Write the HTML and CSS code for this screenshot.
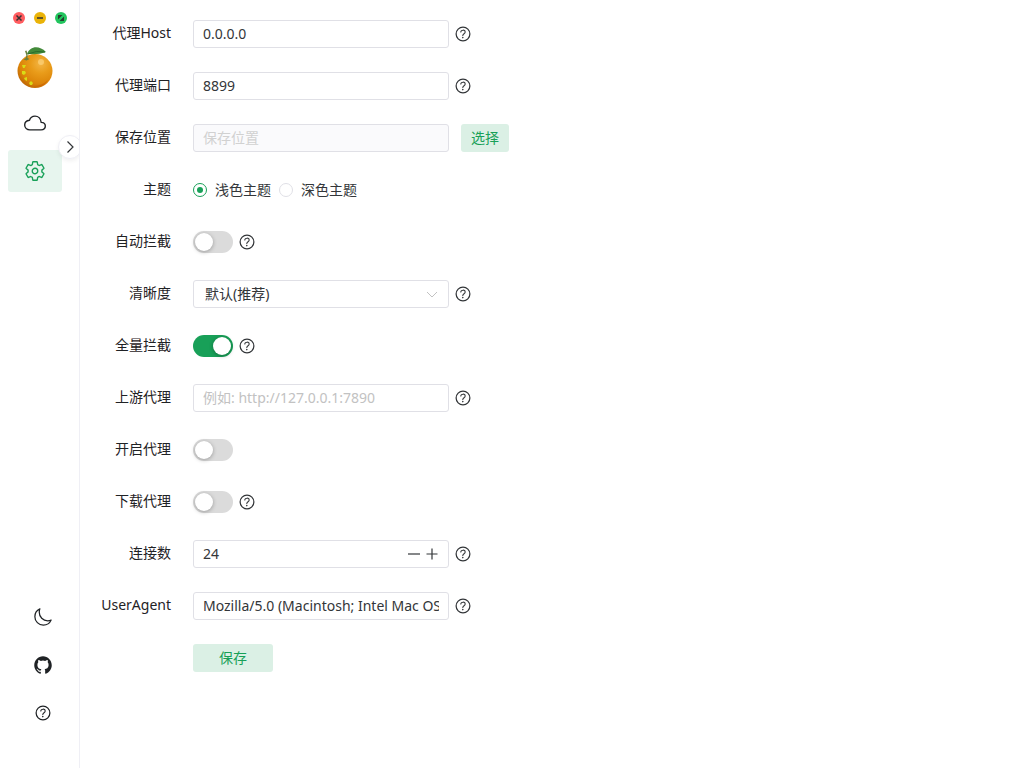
FILE: index.html
```html
<!DOCTYPE html>
<html lang="zh-CN">
<head>
    <meta charset="UTF-8">
    <meta name="viewport" content="width=device-width, initial-scale=1.0">
    <title>设置</title>
    <link rel="stylesheet" href="styles.css">
</head>
<body>

    <!-- shared icons -->
    <svg class="sprite" aria-hidden="true">
        <symbol id="icon-help" viewBox="0 0 512 512">
            <path d="M256 80a176 176 0 10176 176A176 176 0 00256 80z" fill="none" stroke="currentColor" stroke-width="32" stroke-miterlimit="10"/>
            <path d="M200 202.29s.84-17.5 19.57-32.57C230.68 160.77 244 158.18 256 158c10.93-.14 20.69 1.67 26.53 4.45 10 4.76 29.47 16.38 29.47 41.09 0 26-17 37.81-36.37 50.8S251 281.43 251 296" fill="none" stroke="currentColor" stroke-width="28" stroke-linecap="round" stroke-miterlimit="10"/>
            <circle cx="250" cy="348" r="20" fill="currentColor"/>
        </symbol>
    </svg>

    <div class="app">
        <aside class="sidebar">
            <div class="window-controls">
                <button type="button" class="dot dot-close" aria-label="关闭">
                    <svg viewBox="0 0 12 12"><path d="M3.5 3.5l5 5M8.5 3.5l-5 5"/></svg>
                </button>
                <button type="button" class="dot dot-min" aria-label="最小化">
                    <svg viewBox="0 0 12 12"><path d="M3 6h6"/></svg>
                </button>
                <button type="button" class="dot dot-max" aria-label="最大化">
                    <svg viewBox="0 0 12 12"><path class="solid" d="M3 3h4.5L3 7.5zM9 9H4.5L9 4.5z"/></svg>
                </button>
            </div>

            <svg class="logo" viewBox="0 0 36 42" role="img" aria-label="logo">
                <defs>
                    <radialGradient id="peel" cx="0.66" cy="0.28" r="0.8">
                        <stop offset="0" stop-color="#f3b545"/>
                        <stop offset="0.35" stop-color="#e99c1a"/>
                        <stop offset="0.75" stop-color="#dc8408"/>
                        <stop offset="1" stop-color="#b96205"/>
                    </radialGradient>
                </defs>
                <ellipse cx="18" cy="25" rx="17.5" ry="17" fill="url(#peel)"/>
                <path d="M31 34q-6 6-15 6q10 3 15-6z" fill="#c85e05" opacity=".6"/>
                <path d="M9 12q1-3-1-7l1.500-.5q2 4 1 7.500l2 1-3 1.500-3-1z" fill="#6b7f3c"/>
                <path d="M10 8C13 0 22-1 29 6 22 9 15 8 10 8z" fill="#438a3a"/>
                <path d="M11 8q8-4 17-2" fill="none" stroke="#2b6a2a" stroke-width="1"/>
                <circle cx="24" cy="16" r="3" fill="#ffd886" opacity=".6"/>
                <g fill="#d8dc16">
                    <path d="M5 19h4l-1.500 3H6z"/>
                    <path d="M5 25l3 0 1 2-2 2-2-1z"/>
                    <path d="M7 32l3-1 0 4-2-1z"/>
                    <path d="M12 37l2-2 2 2-1 2-2 0z"/>
                </g>
            </svg>

            <nav class="menu">
                <a href="#" class="menu-item" aria-label="首页">
                    <svg viewBox="0 0 512 512"><path d="M400 240c-8.89-89.54-71-144-144-144-69 0-113.44 48.2-128 96-60 6-112 43.59-112 112 0 66 54 112 120 112h260c55 0 100-27.44 100-88 0-59.82-53-85.76-96-88z"/></svg>
                </a>
                <a href="#" class="menu-item active" aria-label="设置">
                    <svg viewBox="0 0 512 512"><path d="M262.29 192.31a64 64 0 1057.4 57.4 64.13 64.13 0 00-57.4-57.4zM416.39 256a154.34 154.34 0 01-1.53 20.79l45.21 35.46a10.81 10.81 0 012.45 13.75l-42.77 74a10.81 10.81 0 01-13.14 4.59l-44.9-18.08a16.11 16.11 0 00-15.17 1.75A164.48 164.48 0 01325 400.8a15.94 15.94 0 00-8.82 12.14l-6.73 47.89a11.08 11.08 0 01-10.68 9.17h-85.54a11.11 11.11 0 01-10.69-8.87l-6.72-47.82a16.07 16.07 0 00-9-12.22 155.3 155.3 0 01-21.46-12.57 16 16 0 00-15.11-1.71l-44.89 18.07a10.81 10.81 0 01-13.14-4.58l-42.77-74a10.8 10.8 0 012.45-13.75l38.21-30a16.05 16.05 0 006-14.08c-.36-4.17-.58-8.33-.58-12.5s.21-8.27.58-12.35a16 16 0 00-6.07-13.94l-38.19-30A10.81 10.81 0 0149.48 186l42.77-74a10.81 10.81 0 0113.14-4.59l44.9 18.08a16.11 16.11 0 0015.17-1.75A164.48 164.48 0 01187 111.2a15.94 15.94 0 008.82-12.14l6.73-47.89A11.08 11.08 0 01213.23 42h85.54a11.11 11.11 0 0110.69 8.87l6.72 47.82a16.07 16.07 0 009 12.22 155.3 155.3 0 0121.46 12.57 16 16 0 0015.11 1.71l44.89-18.07a10.81 10.81 0 0113.14 4.58l42.77 74a10.8 10.8 0 01-2.45 13.75l-38.21 30a16.05 16.05 0 00-6.05 14.08c.33 4.14.55 8.3.55 12.47z"/></svg>
                </a>
            </nav>

            <div class="sidebar-footer">
                <button type="button" class="footer-item" aria-label="切换主题">
                    <svg class="icon" viewBox="0 0 512 512"><path d="M160 136c0-30.62 4.51-61.61 16-88C99.57 81.27 48 159.32 48 248c0 119.29 96.71 216 216 216 88.68 0 166.73-51.57 200-128-26.39 11.49-57.38 16-88 16-119.29 0-216-96.71-216-216z" fill="none" stroke="currentColor" stroke-width="32" stroke-linejoin="round"/></svg>
                </button>
                <a href="#" class="footer-item" aria-label="GitHub">
                    <svg class="icon" viewBox="0 0 512 512"><path fill="currentColor" d="M256 32C132.3 32 32 134.9 32 261.7c0 101.5 64.2 187.5 153.2 217.9a17.56 17.56 0 003.8.4c8.3 0 11.5-6.1 11.5-11.4 0-5.5-.2-19.9-.3-39.1a102.4 102.4 0 01-22.6 2.7c-43.1 0-52.9-33.5-52.9-33.5-10.2-26.5-24.9-33.6-24.9-33.6-19.5-13.7-.1-14.1 1.4-14.1h.1c22.5 2 34.3 23.8 34.3 23.8 11.2 19.6 26.2 25.1 39.6 25.1a63 63 0 0025.6-6c2-14.8 7.8-24.9 14.2-30.7-49.7-5.8-102-25.5-102-113.5 0-25.1 8.7-45.6 23-61.6-2.3-5.8-10-29.2 2.2-60.8a18.64 18.64 0 015-.5c8.1 0 26.4 3.1 56.6 24.1a208.21 208.21 0 01112.2 0c30.2-21 48.5-24.1 56.6-24.1a18.64 18.64 0 015 .5c12.2 31.6 4.5 55 2.2 60.8 14.3 16.1 23 36.6 23 61.6 0 88.2-52.4 107.6-102.3 113.3 8 7.1 15.2 21.1 15.2 42.5 0 30.7-.3 55.5-.3 63 0 5.4 3.1 11.5 11.4 11.5a19.35 19.35 0 004-.4C415.9 449.2 480 363.1 480 261.7 480 134.9 379.7 32 256 32z"/></svg>
                </a>
                <button type="button" class="footer-item" aria-label="帮助">
                    <svg class="icon"><use href="#icon-help"/></svg>
                </button>
            </div>

            <button type="button" class="collapse-button" aria-label="展开">
                <svg viewBox="0 0 16 16"><path d="M5.5 2.500l5.500 5.500-5.500 5.500"/></svg>
            </button>
        </aside>

        <main class="content">
            <form id="settings-form" class="settings">
                <div class="form-row">
                    <label class="form-label" for="host">代理Host</label>
                    <input type="text" id="host" class="field" value="0.0.0.0">
                    <svg class="icon help"><use href="#icon-help"/></svg>
                </div>

                <div class="form-row">
                    <label class="form-label" for="port">代理端口</label>
                    <input type="text" id="port" class="field" value="8899">
                    <svg class="icon help"><use href="#icon-help"/></svg>
                </div>

                <div class="form-row">
                    <label class="form-label" for="save-dir">保存位置</label>
                    <input type="text" id="save-dir" class="field" placeholder="保存位置" disabled>
                    <button type="button" class="button select-button">选择</button>
                </div>

                <div class="form-row" role="radiogroup" aria-labelledby="theme-label">
                    <span class="form-label" id="theme-label">主题</span>
                    <label class="radio"><input type="radio" name="theme" value="light" checked><span>浅色主题</span></label>
                    <label class="radio"><input type="radio" name="theme" value="dark"><span>深色主题</span></label>
                </div>

                <div class="form-row">
                    <label class="form-label" for="auto-proxy">自动拦截</label>
                    <input type="checkbox" id="auto-proxy" class="switch">
                    <svg class="icon help"><use href="#icon-help"/></svg>
                </div>

                <div class="form-row">
                    <label class="form-label" for="quality">清晰度</label>
                    <div class="select-box">
                        <select id="quality" class="field">
                            <option>默认(推荐)</option>
                            <option>超清</option>
                            <option>高画质</option>
                        </select>
                        <svg class="arrow" viewBox="0 0 16 16"><path d="M3 6l5 5 5-5"/></svg>
                    </div>
                    <svg class="icon help"><use href="#icon-help"/></svg>
                </div>

                <div class="form-row">
                    <label class="form-label" for="wx-action">全量拦截</label>
                    <input type="checkbox" id="wx-action" class="switch" checked>
                    <svg class="icon help"><use href="#icon-help"/></svg>
                </div>

                <div class="form-row">
                    <label class="form-label" for="upstream">上游代理</label>
                    <input type="text" id="upstream" class="field" placeholder="例如: http://127.0.0.1:7890">
                    <svg class="icon help"><use href="#icon-help"/></svg>
                </div>

                <div class="form-row">
                    <label class="form-label" for="open-proxy">开启代理</label>
                    <input type="checkbox" id="open-proxy" class="switch">
                </div>

                <div class="form-row">
                    <label class="form-label" for="download-proxy">下载代理</label>
                    <input type="checkbox" id="download-proxy" class="switch">
                    <svg class="icon help"><use href="#icon-help"/></svg>
                </div>

                <div class="form-row">
                    <label class="form-label" for="task-number">连接数</label>
                    <div class="field number-box">
                        <input type="number" id="task-number" value="24" min="2" max="64">
                        <button type="button" class="step" data-step="-1" aria-label="减少"><svg viewBox="0 0 18 18"><path d="M3 9h12"/></svg></button>
                        <button type="button" class="step" data-step="1" aria-label="增加"><svg viewBox="0 0 18 18"><path d="M3.500 9h11M9 3.500v11"/></svg></button>
                    </div>
                    <svg class="icon help"><use href="#icon-help"/></svg>
                </div>

                <div class="form-row">
                    <label class="form-label" for="user-agent">UserAgent</label>
                    <input type="text" id="user-agent" class="field" value="Mozilla/5.0 (Macintosh; Intel Mac OS X 10_15_7) AppleWebKit/537.36">
                    <svg class="icon help"><use href="#icon-help"/></svg>
                </div>

                <div class="form-row">
                    <span class="form-label"></span>
                    <button type="submit" class="button save-button">保存</button>
                </div>
            </form>
        </main>
    </div>

    <script>
        const taskNumber = document.getElementById('task-number');

        document.querySelectorAll('.step').forEach(function (button) {
            button.addEventListener('click', function () {
                if (button.dataset.step === '1') {
                    taskNumber.stepUp();
                } else {
                    taskNumber.stepDown();
                }
            });
        });

        document.getElementById('settings-form').addEventListener('submit', function (event) {
            event.preventDefault();
        });
    </script>

</body>
</html>
```
FILE: styles.css
```css
* {
    box-sizing: border-box;
}

body {
    margin: 0;
    font-family: "Noto Sans", "Noto Sans CJK SC", sans-serif;
    font-size: 14px;
    color: #1f2225;
    background-color: #fff;
}

button {
    padding: 0;
    border: none;
    background: none;
    color: inherit;
    font-family: inherit;
    font-size: inherit;
    cursor: pointer;
}

.sprite {
    display: none;
}

.icon {
    display: block;
    width: 20px;
    height: 20px;
    flex-shrink: 0;
}

.app {
    display: flex;
    min-height: 100vh;
}

/* sidebar */
.sidebar {
    position: relative;
    display: flex;
    flex-direction: column;
    width: 80px;
    flex-shrink: 0;
    border-right: 1px solid #efeff5;
    overflow: hidden;
}

.window-controls {
    display: flex;
    gap: 9px;
    padding: 12px 0 12px 13px;
}

.dot {
    width: 12px;
    height: 12px;
    border-radius: 50%;
}

.dot svg {
    display: block;
    fill: none;
    stroke: #333;
    stroke-width: 1.5;
}

.dot .solid {
    fill: #24402e;
    stroke: none;
}

.dot-close {
    background-color: #ff5c5f;
}

.dot-min {
    background-color: #eab308;
}

.dot-max {
    background-color: #22c55e;
}

.logo {
    width: 36px;
    height: 42px;
    margin: 10px 17px 14px;
}

.menu {
    display: flex;
    flex-direction: column;
    gap: 6px;
    padding: 0 17px 0 8px;
}

.menu-item {
    display: flex;
    align-items: center;
    justify-content: center;
    height: 42px;
    border-radius: 3px;
    color: #1f2225;
}

.menu-item.active {
    color: #18a058;
    background-color: #e7f5ee;
}

.menu-item svg {
    width: 22px;
    height: 22px;
    fill: none;
    stroke: currentColor;
    stroke-width: 32;
    stroke-linecap: round;
    stroke-linejoin: round;
}

.sidebar-footer {
    display: flex;
    flex-direction: column;
    align-items: center;
    gap: 6px;
    margin-top: auto;
    padding: 0 0 34px 6px;
}

.footer-item {
    display: flex;
    align-items: center;
    height: 42px;
    color: #1f2225;
}

.collapse-button {
    position: absolute;
    top: 135px;
    left: 58px;
    display: flex;
    align-items: center;
    justify-content: center;
    width: 24px;
    height: 24px;
    border: 1px solid #efeff5;
    border-radius: 50%;
    background-color: #fff;
    box-shadow: 0 2px 4px rgba(0, 0, 0, 0.06);
}

.collapse-button svg {
    width: 16px;
    height: 16px;
    fill: none;
    stroke: #333639;
    stroke-width: 1.2;
}

/* settings form */
.content {
    flex: 1;
    padding: 20px 16px;
}

.settings {
    display: flex;
    flex-direction: column;
    gap: 24px;
}

.form-row {
    display: flex;
    align-items: center;
    height: 28px;
}

.form-label {
    align-self: flex-start;
    width: 75px;
    margin-right: 22px;
    line-height: 26px;
    text-align: right;
    white-space: nowrap;
}

.field {
    width: 256px;
    height: 28px;
    padding: 0 9px 2px;
    border: 1px solid #e0e0e6;
    border-radius: 3px;
    background-color: #fff;
    color: #333639;
    font-family: inherit;
    font-size: 14px;
}

.field::placeholder {
    color: #c2c2c2;
}

.field:disabled {
    background-color: #fafafc;
}

.field:disabled::placeholder {
    color: #d1d1d1;
}

.help {
    margin-left: 4px;
    color: #333639;
}

.button {
    height: 28px;
    padding-bottom: 2px;
    border-radius: 3px;
    background-color: #dbf0e5;
    color: #18a058;
}

.select-button {
    width: 48px;
    margin-left: 12px;
}

.save-button {
    width: 80px;
}

.radio {
    display: flex;
    align-items: center;
    gap: 8px;
    margin-right: 8px;
    color: #333639;
}

.radio span {
    padding-bottom: 2px;
}

.radio input {
    appearance: none;
    display: flex;
    align-items: center;
    justify-content: center;
    width: 14px;
    height: 14px;
    margin: 0;
    border: 1px solid #e0e0e6;
    border-radius: 50%;
}

.radio input:checked {
    border-color: #18a058;
}

.radio input:checked::before {
    content: "";
    width: 6px;
    height: 6px;
    border-radius: 50%;
    background-color: #18a058;
}

.switch {
    appearance: none;
    display: flex;
    width: 40px;
    height: 22px;
    margin: 0;
    padding: 2px;
    border-radius: 11px;
    background-color: #dbdbdb;
    cursor: pointer;
}

.switch::before {
    content: "";
    width: 18px;
    height: 18px;
    border-radius: 50%;
    background-color: #fff;
    box-shadow: 0 1px 4px rgba(0, 0, 0, 0.3);
}

.switch:checked {
    justify-content: flex-end;
    background-color: #18a058;
}

.select-box {
    position: relative;
}

.select-box .field {
    display: block;
    appearance: none;
    padding: 0 11px 2px;
}

.arrow {
    position: absolute;
    top: 6px;
    right: 9px;
    width: 16px;
    height: 16px;
    fill: none;
    stroke: #c2c2c2;
    stroke-width: 1;
    pointer-events: none;
}

.number-box {
    display: flex;
    align-items: center;
    padding: 0 7px 0 9px;
}

.number-box input {
    flex: 1;
    min-width: 0;
    padding: 0 0 2px;
    border: none;
    outline: none;
    color: inherit;
    font-family: inherit;
    font-size: inherit;
    appearance: textfield;
}

.step {
    width: 18px;
    height: 18px;
}

.step svg {
    display: block;
    fill: none;
    stroke: #333639;
    stroke-width: 1.2;
}
```
